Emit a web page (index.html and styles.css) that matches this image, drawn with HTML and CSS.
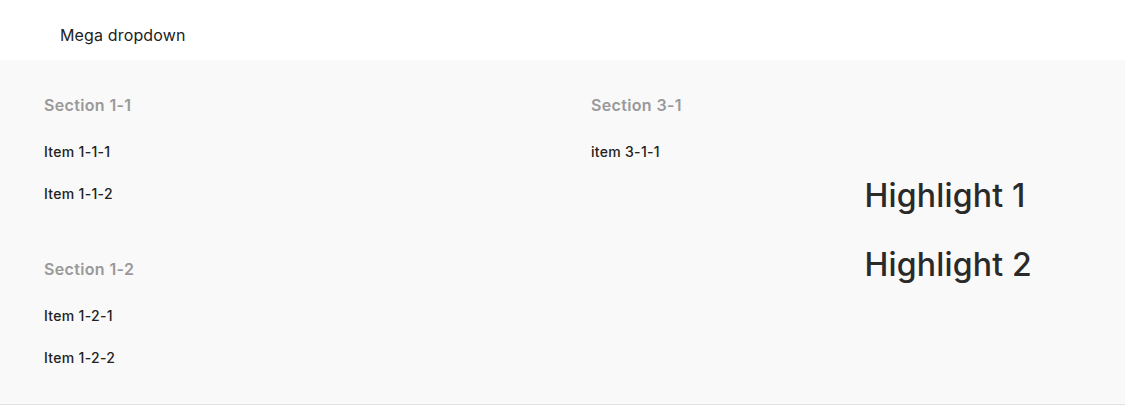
FILE: index.html
```html
<!DOCTYPE html>
<html>
<head>
<meta charset="utf-8">
<link rel="stylesheet" href="styles.css">
</head>
<body>
<header class="nav">
  <span class="nav-item">Mega dropdown</span>
</header>
<div class="mega">
  <div class="col">
    <div class="section">
      <div class="section-title">Section 1-1</div>
      <div class="item">Item 1-1-1</div>
      <div class="item">Item 1-1-2</div>
    </div>
    <div class="section">
      <div class="section-title">Section 1-2</div>
      <div class="item">Item 1-2-1</div>
      <div class="item">Item 1-2-2</div>
    </div>
  </div>
  <div class="col"></div>
  <div class="col">
    <div class="section">
      <div class="section-title">Section 3-1</div>
      <div class="item">item 3-1-1</div>
    </div>
  </div>
  <div class="col highlights">
    <div class="highlight">Highlight 1</div>
    <div class="highlight">Highlight 2</div>
  </div>
</div>
</body>
</html>
```

FILE: styles.css
```css
html, body {
  margin: 0;
  padding: 0;
  background: #ffffff;
  overflow: hidden;
}
body {
  font-family: Inter, "Noto Sans", sans-serif;
  color: #222222;
}
.nav {
  height: 60px;
  box-sizing: border-box;
  display: flex;
  align-items: center;
  padding-left: 60px;
  padding-top: 10px;
  background: #ffffff;
}
.nav-item {
  font-size: 16px;
  color: #222222;
  letter-spacing: 0.15px;
}
.mega {
  display: grid;
  grid-template-columns: 273.5px 273.5px 273.5px 273.5px;
  padding-left: 44px;
  background: #f9f9f9;
  height: 345px;
  box-sizing: border-box;
  padding-top: 33px;
  box-shadow: 0 1px 2px rgba(0, 0, 0, 0.1);
  border-bottom: 1px solid #e2e2e2;
}
.col {
  display: flex;
  flex-direction: column;
}
.section {
  display: flex;
  flex-direction: column;
  margin-bottom: 42px;
}
.section-title {
  font-size: 16px;
  font-weight: 600;
  color: #999999;
  line-height: 24px;
  letter-spacing: 0.35px;
  margin-bottom: 14px;
}
.item {
  font-size: 14px;
  font-weight: 500;
  color: #222222;
  line-height: 42px;
  letter-spacing: 0.3px;
}
.highlights {
  padding-top: 68px;
}
.highlight {
  font-size: 32px;
  font-weight: 500;
  color: #2a2a2a;
  line-height: 69px;
  letter-spacing: 0.2px;
}
```
